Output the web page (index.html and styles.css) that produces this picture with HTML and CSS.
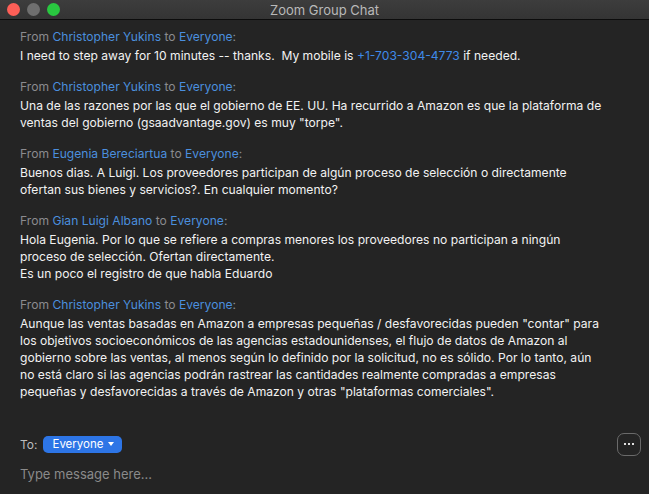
FILE: index.html
```html
<!DOCTYPE html>
<html>
<head>
<meta charset="utf-8">
<link rel="stylesheet" href="styles.css">
</head>
<body>
<div class="window">
  <div class="titlebar">
    <div class="lights">
      <span class="light red"></span>
      <span class="light grey"></span>
      <span class="light green"></span>
    </div>
    <div class="title">Zoom Group Chat</div>
  </div>
  <div class="messages">
    <div class="msg">
      <div class="head">From <span class="name">Christopher Yukins</span> to <span class="name">Everyone</span>:</div>
      <div class="text">I need to step away for 10 minutes -- thanks.&nbsp; My mobile is <span class="link">+1-703-304-4773</span> if needed.</div>
    </div>
    <div class="msg">
      <div class="head">From <span class="name">Christopher Yukins</span> to <span class="name">Everyone</span>:</div>
      <div class="text">Una de las razones por las que el gobierno de EE. UU. Ha recurrido a Amazon es que la plataforma de<br>ventas del gobierno (gsaadvantage.gov) es muy "torpe".</div>
    </div>
    <div class="msg">
      <div class="head">From <span class="name">Eugenia Bereciartua</span> to <span class="name">Everyone</span>:</div>
      <div class="text">Buenos dias. A Luigi. Los proveedores participan de algún proceso de selección o directamente<br>ofertan sus bienes y servicios?. En cualquier momento?</div>
    </div>
    <div class="msg">
      <div class="head">From <span class="name">Gian Luigi Albano</span> to <span class="name">Everyone</span>:</div>
      <div class="text">Hola Eugenia. Por lo que se refiere a compras menores los proveedores no participan a ningún<br>proceso de selección. Ofertan directamente.<br>Es un poco el registro de que habla Eduardo</div>
    </div>
    <div class="msg">
      <div class="head">From <span class="name">Christopher Yukins</span> to <span class="name">Everyone</span>:</div>
      <div class="text">Aunque las ventas basadas en Amazon a empresas pequeñas / desfavorecidas pueden "contar" para<br>los objetivos socioeconómicos de las agencias estadounidenses, el flujo de datos de Amazon al<br>gobierno sobre las ventas, al menos según lo definido por la solicitud, no es sólido. Por lo tanto, aún<br>no está claro si las agencias podrán rastrear las cantidades realmente compradas a empresas<br>pequeñas y desfavorecidas a través de Amazon y otras "plataformas comerciales".</div>
    </div>
  </div>
  <div class="composer">
    <div class="to-row">
      <span class="to-label">To:</span>
      <span class="recipient">Everyone <span class="caret"></span></span>
      <span class="more"><span class="dot"></span><span class="dot"></span><span class="dot"></span></span>
    </div>
    <div class="input">Type message here...</div>
  </div>
</div>
</body>
</html>
```
FILE: styles.css
```css
html, body {
  margin: 0;
  padding: 0;
  background: #242424;
}
.window {
  width: 649px;
  height: 494px;
  display: flex;
  flex-direction: column;
  font-family: Inter, "Liberation Sans", Arial, sans-serif;
  font-size: 12.1px;
  color: #ececec;
  overflow: hidden;
}
.titlebar {
  height: 19px;
  background: linear-gradient(#3d3d3d, #343434);
  border-bottom: 1px solid #0c0c0c;
  display: flex;
  align-items: center;
  position: relative;
}
.lights {
  display: flex;
  gap: 7px;
  padding-left: 7px;
}
.light {
  width: 13px;
  height: 13px;
  border-radius: 50%;
}
.red { background: #fe5f57; }
.grey { background: #6f6f6f; }
.green { background: #29c840; }
.title {
  position: absolute;
  left: 0;
  right: 0;
  top: 2px;
  text-align: center;
  font-size: 13px;
  color: #b9b9b9;
}
.messages {
  flex: 1;
  padding: 8px 4px 0 20px;
}
.msg {
  margin-bottom: 14px;
}
.head {
  color: #8b8b8f;
  line-height: 17px;
  margin-bottom: 2px;
}
.name {
  color: #4b8fde;
}
.text {
  line-height: 17px;
  color: #f2f2f2;
}
.link {
  color: #3f8ae8;
}
.composer {
  padding: 0 8px 12px 20px;
}
.to-row {
  display: flex;
  align-items: center;
  height: 24px;
}
.to-label {
  color: #bdbdbd;
  font-size: 12px;
  margin-right: 6px;
}
.recipient {
  background: #2d75e6;
  color: #ffffff;
  font-size: 11.5px;
  border-radius: 5px;
  height: 17px;
  padding: 0 8px 0 9px;
  display: inline-flex;
  align-items: center;
  gap: 5px;
}
.caret {
  width: 0;
  height: 0;
  border-left: 3.5px solid transparent;
  border-right: 3.5px solid transparent;
  border-top: 4px solid #ffffff;
}
.more {
  margin-left: auto;
  width: 22px;
  height: 21px;
  border: 1px solid #6a6a6a;
  border-radius: 7px;
  display: flex;
  align-items: center;
  justify-content: center;
  gap: 2px;
}
.dot {
  width: 2px;
  height: 2px;
  background: #e0e0e0;
}
.input {
  color: #8a8a8a;
  font-size: 13px;
  margin-top: 10px;
}
```
